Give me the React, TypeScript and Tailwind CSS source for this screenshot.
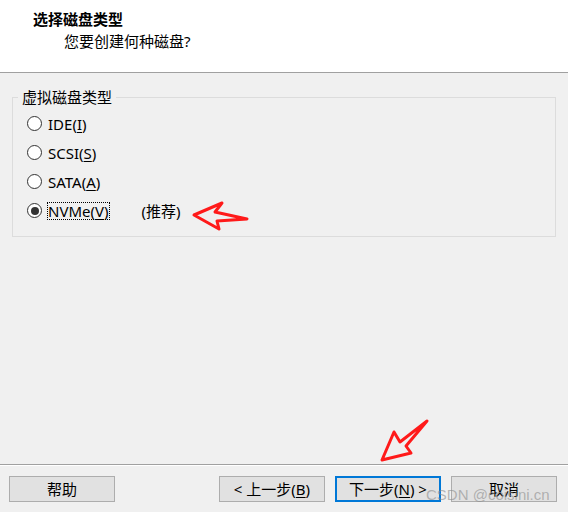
import React from "react";

const font = { fontFamily: '"Noto Sans", "Noto Sans CJK SC", sans-serif' };

type Option = { key: string; pre: string; mn: string; checked?: boolean };

const options: Option[] = [
  { key: "ide", pre: "IDE", mn: "I" },
  { key: "scsi", pre: "SCSI", mn: "S" },
  { key: "sata", pre: "SATA", mn: "A" },
  { key: "nvme", pre: "NVMe", mn: "V", checked: true },
];

function Radio({ checked }: { checked?: boolean }) {
  return (
    <span className="flex items-center justify-center w-[15px] h-[15px] rounded-full border border-[#333333] bg-white shrink-0">
      {checked && <span className="w-[8px] h-[8px] rounded-full bg-[#333333]" />}
    </span>
  );
}

function Btn({ children, primary }: { children: React.ReactNode; primary?: boolean }) {
  return (
    <button
      className={
        primary
          ? "w-[106px] h-[26px] flex items-center justify-center bg-[#e1e1e1] border-2 border-[#0078d7] text-[15px] leading-[20px] text-black"
          : "w-[106px] h-[26px] flex items-center justify-center bg-[#e1e1e1] border border-[#adadad] text-[15px] leading-[20px] text-black"
      }
    >
      {children}
    </button>
  );
}

export default function App() {
  return (
    <div className="relative w-[568px] h-[512px] flex flex-col bg-[#f0f0f0] overflow-hidden" style={font}>
      <div className="h-[72px] bg-white border-b border-[#a0a0a0] box-content">
        <div className="pt-[9px] pl-[33px] text-[15px] leading-[20px] font-bold text-black">选择磁盘类型</div>
        <div className="mt-[2px] pl-[64px] text-[15px] leading-[20px] text-black">您要创建何种磁盘?</div>
      </div>

      <div className="flex-1 px-[12px] pt-[14px]">
        <fieldset className="border border-[#dcdcdc] m-0 p-0 min-w-0">
          <legend className="ml-[5px] px-[4px] text-[15px] leading-[20px] text-black">虚拟磁盘类型</legend>
          <div className="pt-[2px] pb-[11px] pl-[14px]">
            {options.map((o) => (
              <div key={o.key} className="h-[29px] flex items-center">
                <Radio checked={o.checked} />
                <span
                  className={
                    o.checked
                      ? "ml-[5px] border border-dotted border-black text-[15px] leading-[16px] text-black"
                      : "ml-[5px] border border-transparent text-[15px] leading-[16px] text-black"
                  }
                >
                  {o.pre}(<span className="underline underline-offset-2">{o.mn}</span>)
                </span>
                {o.checked && <span className="ml-[32px] text-[15px] leading-[16px] text-black">(推荐)</span>}
              </div>
            ))}
          </div>
        </fieldset>
      </div>

      <div className="border-t border-[#a0a0a0]">
        <div className="border-t border-white flex items-center pl-[9px] pr-[11px] pt-[10px] pb-[10px]">
          <Btn>帮助</Btn>
          <div className="flex-1" />
          <div className="flex gap-[10px]">
            <Btn>
              &lt; 上一步(<span className="underline underline-offset-2">B</span>)
            </Btn>
            <Btn primary>
              下一步(<span className="underline underline-offset-2">N</span>) &gt;
            </Btn>
            <Btn>取消</Btn>
          </div>
        </div>
      </div>

      <svg
        className="absolute inset-0 pointer-events-none"
        width="568"
        height="512"
        viewBox="0 0 568 512"
      >
        <polygon
          points="194,215 222,203 215,212 247,219 217,221 219,229"
          fill="none"
          stroke="#ff1a1a"
          strokeWidth="3"
          strokeLinejoin="round"
        />
        <polygon
          points="382,460 394,432 400,442 427,421 406,446 411,453"
          fill="none"
          stroke="#ff1a1a"
          strokeWidth="3"
          strokeLinejoin="round"
        />
      </svg>

      <div
        className="absolute left-[426px] top-[486px] text-[15px] leading-[18px] text-[#8c8c8c]/60 pointer-events-none whitespace-nowrap"
        style={{ fontFamily: '"Liberation Sans", sans-serif' }}
      >
        CSDN @coisini.cn
      </div>
    </div>
  );
}
